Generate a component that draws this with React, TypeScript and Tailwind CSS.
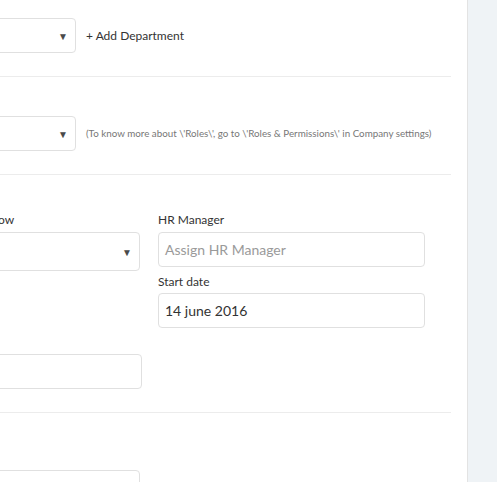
import React from 'react';

const Caret = () => (
  <span className="text-[10px] leading-none text-[#4a4a4a]">▼</span>
);

const SelectBox = ({ className }: { className: string }) => (
  <div
    className={`flex items-center justify-end rounded border border-[#e0e0e0] bg-white pr-[7px] ${className}`}
  >
    <Caret />
  </div>
);

const Label = ({ children, className = '' }: { children: React.ReactNode; className?: string }) => (
  <div className={`whitespace-nowrap text-[12px] leading-[16px] text-[#333] ${className}`}>{children}</div>
);

const Input = ({ value, placeholder, className }: { value?: string; placeholder?: string; className: string }) => (
  <div
    className={`flex h-[35px] items-center rounded border border-[#e0e0e0] bg-white px-[6px] text-[14px] ${className}`}
  >
    {value ? (
      <span className="text-[#333]">{value}</span>
    ) : (
      <span className="text-[#9a9a9a]">{placeholder}</span>
    )}
  </div>
);

const Divider = () => <div className="h-px bg-[#ececec]" />;

export default function App() {
  return (
    <div className="flex h-[482px] w-full overflow-hidden bg-white font-['Lato',sans-serif]">
      <main className="min-w-0 flex-1 overflow-hidden">
        <div className="ml-[-120px] mr-[16px]">
          {/* department */}
          <section className="flex items-center gap-[10px] pb-[23px] pt-[18px]">
            <SelectBox className="h-[35px] w-[196px]" />
            <button className="whitespace-nowrap text-[12px] text-[#333]">+ Add Department</button>
          </section>
          <Divider />

          {/* role */}
          <section className="flex items-center gap-[10px] pb-[23px] pt-[39px]">
            <SelectBox className="h-[35px] w-[196px]" />
            <p className="whitespace-nowrap text-[9.8px] text-[#777]">
              (To know more about \'Roles\', go to \'Roles &amp; Permissions\' in Company settings)
            </p>
          </section>
          <Divider />

          {/* workflow + manager */}
          <section className="flex gap-[16px] pb-[23px] pt-[37px]">
            <div className="flex w-[262px] flex-col">
              <Label className="mb-1 self-start ml-[-1px]">Leave Approval Workflow</Label>
              <SelectBox className="h-[39px] w-[260px]" />
              <Input className="mt-[83px] w-[262px]" />
            </div>
            <div className="flex w-[267px] flex-col">
              <Label className="mb-1">HR Manager</Label>
              <Input placeholder="Assign HR Manager" className="w-[267px]" />
              <Label className="mb-[3px] mt-[7px]">Start date</Label>
              <Input value="14 june 2016" className="w-[267px]" />
            </div>
          </section>
          <Divider />

          <section className="pt-[57px]">
            <Input className="w-[260px]" />
          </section>
        </div>
      </main>
      <aside className="w-[30px] shrink-0 border-l border-[#e3e3e3] bg-[#eff3f6]" />
    </div>
  );
}
